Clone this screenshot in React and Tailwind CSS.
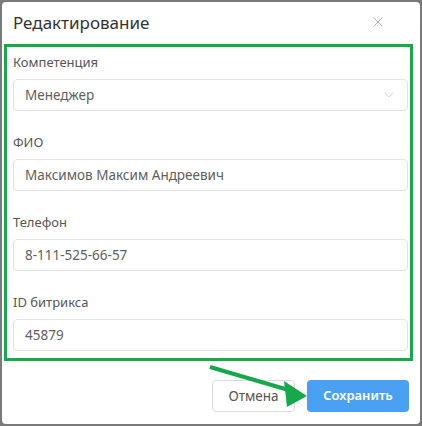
import { X, ChevronDown } from "lucide-react";

function Field({ label, value, select }) {
    return (
        <div className="mb-[22px] last:mb-0">
            <div className="h-[18px] text-[13px] leading-[18px] text-[#555]">{label}</div>
            <div className="mt-2 flex h-8 items-center justify-between rounded-[4px] border border-[#e3e3e3] pl-[11px] pr-[10px] text-[13.5px] text-[#606060]">
                <span>{value}</span>
                {select && <ChevronDown size={16} strokeWidth={1} className="text-[#c0c0c0]"/>}
            </div>
        </div>
    );
}

export default function App() {
    return (
        <div className="h-[426px] w-[422px] bg-[#7a7a7a] p-[2px] font-['Noto_Sans',sans-serif]">
            <div className="relative h-full rounded-[4px] bg-white">
                <div className="flex h-[42px] items-start justify-between pl-[11px] pr-[34px] pt-[8px]">
                    <h1 className="text-[17px] leading-[26px] text-[#333]">Редактирование</h1>
                    <X size={16} strokeWidth={1} className="mt-[4px] text-[#8a8a8a]"/>
                </div>
                <div className="ml-[2px] mr-[7px] border-[3px] border-[#17a84b] pb-[7px] pl-[6px] pr-[2px] pt-[6px]">
                    <Field label="Компетенция" value="Менеджер" select/>
                    <Field label="ФИО" value="Максимов Максим Андреевич"/>
                    <Field label="Телефон" value="8-111-525-66-57"/>
                    <Field label="ID битрикса" value="45879"/>
                </div>
                <div className="mt-[19px] flex justify-end gap-[12px] pr-[11px]">
                    <button className="h-8 w-[83px] rounded-[4px] border border-[#dcdcdc] bg-white text-[13.5px] text-[#555]">Отмена</button>
                    <button className="h-8 w-[102px] rounded-[4px] bg-[#4aa0f2] text-[13px] font-semibold text-white">Сохранить</button>
                </div>
                <svg className="absolute left-0 top-0 pointer-events-none" width="418" height="422">
                    <line x1="208" y1="365" x2="290" y2="389" stroke="#17a84b" strokeWidth="4"/>
                    <polygon points="305,394 282,379 285,405" fill="#17a84b"/>
                </svg>
            </div>
        </div>
    );
}
